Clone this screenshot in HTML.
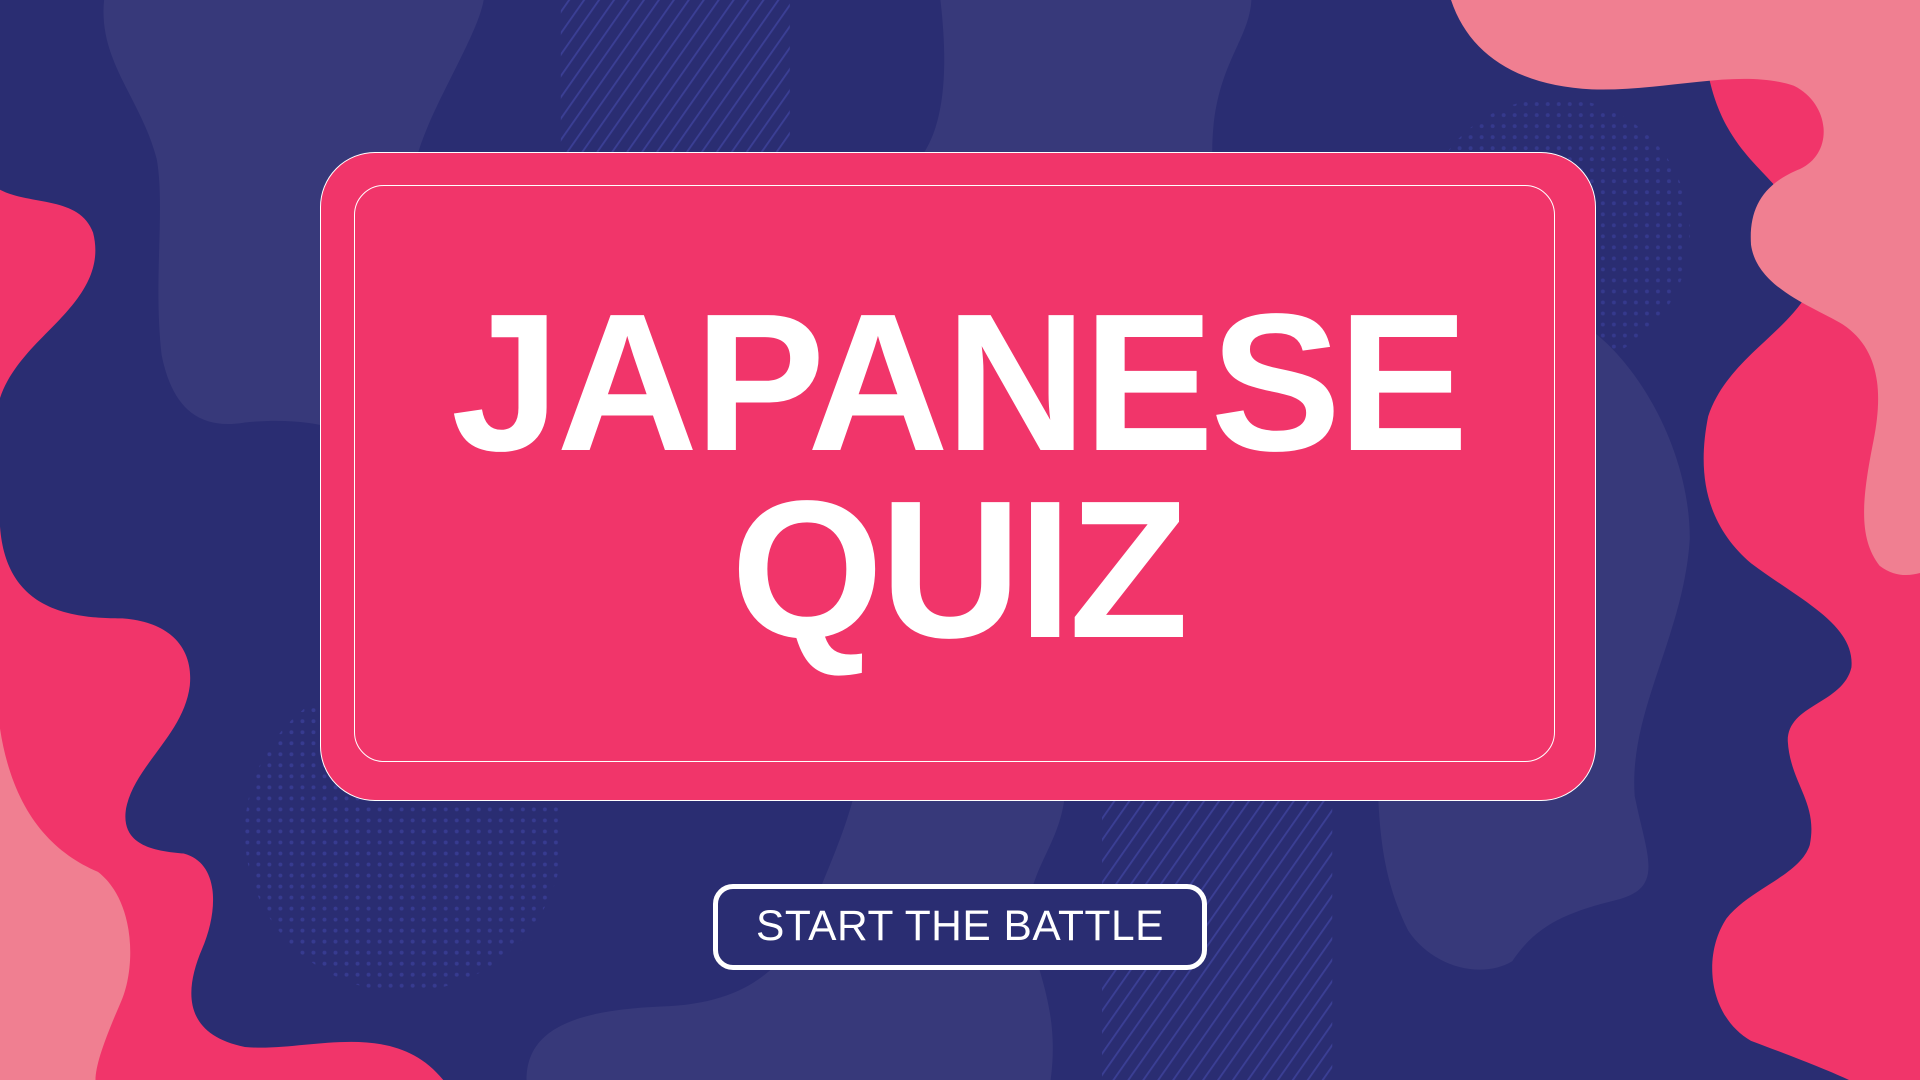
<!DOCTYPE html>
<html><head><meta charset="utf-8"><style>
html,body{margin:0;padding:0;width:1920px;height:1080px;overflow:hidden;background:#2a2d72;font-family:"Liberation Sans",sans-serif}
svg.bg{position:absolute;left:0;top:0;width:1920px;height:1080px}
.card{position:absolute;left:320px;top:152px;width:1276px;height:649px;box-sizing:border-box;background:#f1356a;border:1.5px solid #fff;border-radius:55px}
.inner{position:absolute;left:354px;top:185px;width:1201px;height:577px;box-sizing:border-box;border:1.5px solid #fff;border-radius:30px}
.t{position:absolute;left:320px;width:1276px;text-align:center;color:#fff;font-weight:bold;font-size:196px;line-height:1;letter-spacing:-3.5px}
.btn{position:absolute;left:713px;top:884px;width:494px;height:86px;box-sizing:border-box;border:5px solid #fff;border-radius:20px;background:#2a2d72;color:#fff;font-size:42.5px;text-align:center;line-height:76px;letter-spacing:0.5px}
</style></head><body>
<svg class="bg" viewBox="0 0 1568 882" preserveAspectRatio="none">
<defs>
<pattern id="st" width="10" height="10" patternUnits="userSpaceOnUse" patternTransform="rotate(35)"><rect width="1.5" height="10" fill="#3b3f95"/></pattern>
<pattern id="dt" width="9" height="9" patternUnits="userSpaceOnUse"><circle cx="4" cy="4" r="1.6" fill="#3a3e98"/></pattern>
</defs>
<rect x="458" y="0" width="187" height="124" fill="url(#st)"/>
<rect x="900" y="654" width="188" height="228" fill="url(#st)"/>
<circle cx="330" cy="680" r="130" fill="url(#dt)" opacity="0.8"/>
<circle cx="1270" cy="190" r="110" fill="url(#dt)" opacity="0.7"/>
<g fill="#37397a">
<path d="M85,0 L395,0 C390,30 350,90 340,130 L300,360 C280,350 250,340 200,345 C160,352 140,330 132,290 C125,230 135,170 128,130 C115,80 80,50 85,0Z"/>
<path d="M768,0 L1022,0 C1020,35 990,55 990,124 L755,124 C770,100 775,60 768,0Z"/>
<path d="M1300,270 C1340,300 1380,370 1380,440 C1375,520 1330,580 1335,650 C1345,700 1360,725 1320,735 C1280,745 1255,755 1235,785 C1210,800 1170,790 1150,760 C1130,720 1125,680 1125,620 L1250,600Z"/>
<path d="M700,640 L870,640 C870,690 835,710 840,760 C850,800 865,830 858,882 L430,882 C430,840 470,825 540,822 C610,820 640,790 660,750 C680,700 690,680 700,640Z"/>
</g>
<g fill="#f1356a">
<path d="M0,155 C25,168 65,160 76,190 C85,225 60,250 35,275 C15,295 5,310 0,325Z"/>
<path d="M0,430 C5,500 60,505 100,505 C140,508 158,530 155,560 C150,600 110,625 103,660 C98,690 125,695 150,697 C180,705 178,745 165,775 C150,810 150,845 200,855 C250,860 320,830 362,882 L0,882Z"/>
<path d="M1395,60 C1405,110 1430,130 1448,150 L1476,240 C1455,275 1410,295 1395,340 C1385,390 1395,430 1430,460 C1470,490 1515,510 1512,545 C1505,575 1460,575 1460,605 C1462,640 1485,655 1478,690 C1470,715 1430,725 1410,750 C1390,780 1395,830 1430,850 C1470,865 1495,875 1510,882 L1568,882 L1568,60Z"/>
</g>
<g fill="#f07f91">
<path d="M1185,0 C1200,45 1240,70 1300,73 C1360,75 1420,55 1465,70 C1495,85 1498,125 1470,138 C1440,150 1428,170 1430,200 C1435,235 1480,250 1505,265 C1535,285 1538,320 1530,360 C1520,410 1518,440 1535,462 C1548,472 1560,470 1568,468 L1568,0Z"/>
<path d="M0,595 C10,660 40,695 80,712 C110,735 112,790 98,820 C85,850 78,870 78,882 L0,882Z"/>
</g>
</svg>
<div class="card"></div>
<div class="inner"></div>
<div class="t" style="top:285px">JAPANESE</div>
<div class="t" style="top:472px">QUIZ</div>
<div class="btn">START THE BATTLE</div>
</body></html>
